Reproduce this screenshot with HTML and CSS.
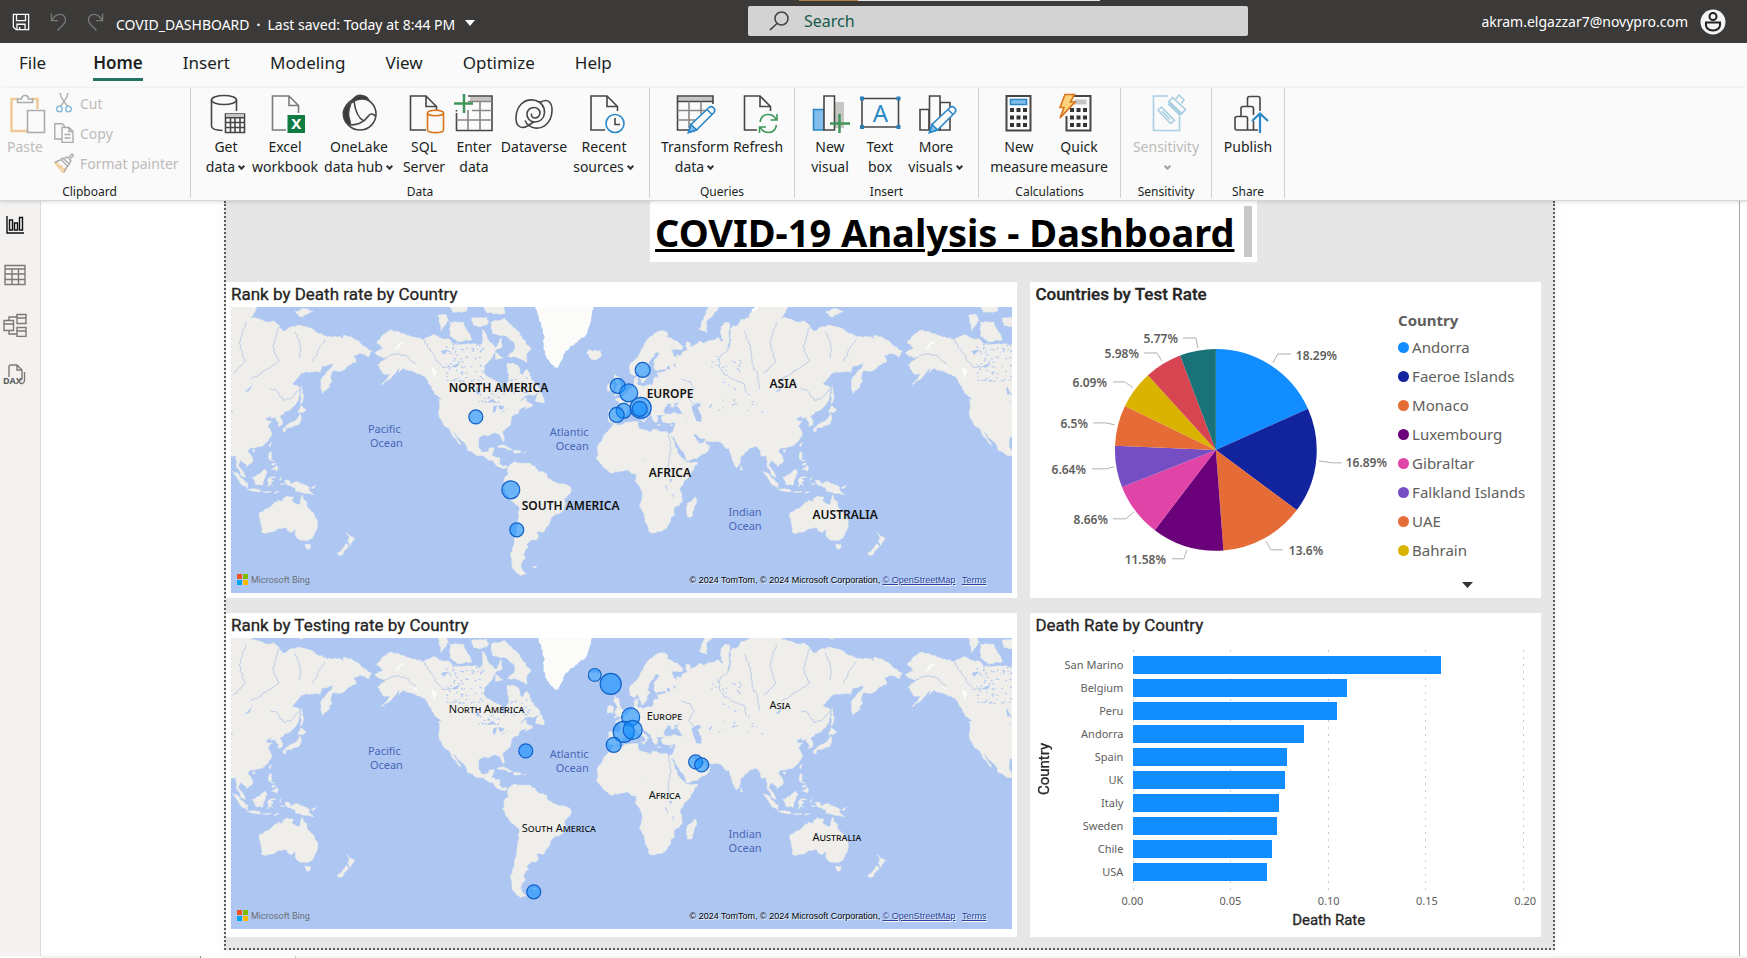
FILE: index.html
```html
<!DOCTYPE html>
<html lang="en">
<head>
<meta charset="utf-8">
<title>COVID_DASHBOARD</title>
<link rel="stylesheet" href="styles.css">
</head>
<body>
<div class="app">
<header class="titlebar">
  <div class="progress"></div>
  <div class="doc">
    <button class="bare" aria-label="Save"><svg class="ic-save" viewBox="0 0 20 20"><path d="M1.5 1.5h17v17H4.500l-3-3zM5 1.500v7h10v-7M5.500 18.500v-6h9v6M8.500 18v-2.500"/></svg></button>
    <button class="bare dim" aria-label="Undo"><svg class="ic-undo" viewBox="0 0 18 20"><path d="M1.500 1v7.500h7M1.800 8.300C4 4.500 7 2 10.500 2c3.500 0 6 2.500 6 5.500 0 5-5 7-8.500 11.500"/></svg></button>
    <button class="bare dim" aria-label="Redo"><svg class="ic-undo" viewBox="0 0 18 20"><path d="M16.500 1v7.500h-7M16.200 8.300C14 4.500 11 2 7.500 2c-3.500 0-6 2.500-6 5.500 0 5 5 7 8.500 11.500"/></svg></button>
    <button class="bare docname"><span>COVID_DASHBOARD</span><b>·</b><span>Last saved: Today at 8:44 PM</span><svg class="ic-caret" viewBox="0 0 10 6"><path d="M0 0h10L5 6z"/></svg></button>
  </div>
  <label class="search"><svg viewBox="0 0 20 20"><circle cx="12.500" cy="7.500" r="6.500"/><path d="M8 12.500.800 19.200"/></svg><input type="text" placeholder="Search" aria-label="Search"></label>
  <button class="bare account">akram.elgazzar7@novypro.com
    <svg viewBox="0 0 26 26"><circle class="disc" cx="13" cy="13" r="12.500"/><circle cx="13" cy="7.500" r="3.500"/><path d="M6 13.500h14c.8 5.500-2.500 8-7 8s-7.800-2.500-7-8z"/></svg></button>
</header>

<nav class="tabs">
  <button>File</button><button class="on">Home</button><button>Insert</button><button>Modeling</button><button>View</button><button>Optimize</button><button>Help</button>
</nav>

<section class="ribbon">
  <div class="group g-clip">
    <div class="tools">
      <button class="tool off"><svg viewBox="0 0 40 40"><path class="or" d="M13 5H6.500v32H22M27 5h5.500v10" stroke-width="2.500"/><path class="gy" d="M12.500 8.500V5h4c0-2 1.500-3.500 3.500-3.500S23.500 3 23.500 5h4v3.500z"/><path class="gy paper" d="M22.500 16.500h17v22h-17z"/></svg>Paste</button>
      <div class="stack">
        <button><svg viewBox="0 0 20 20"><path class="gy" d="M6 0c.5 4 2 7 8 13.500M14 0c-.5 4-2 7-8 13.500"/><circle class="bl" cx="5.500" cy="16" r="2.800"/><circle class="bl" cx="14.500" cy="16" r="2.800"/></svg>Cut</button>
        <button><svg viewBox="0 0 20 20"><path class="gy" d="M8 16H.8V.8H8l3 3M8 4.500h7l4 4v11H8zM15 4.500v4h4M10.500 11.500h6M10.500 15h6"/></svg>Copy</button>
        <button><svg viewBox="0 0 20 20"><path class="or" d="M2 9l9 9-2 1.500L1 10z"/><path class="or" d="M5 14l4-1M8 17l5-2"/><path class="gy" d="M.8 9.500 7 6.500l6.500 6.500-3.500 6M7 6.500l1.500-1.500 7 6-1.800 2M10.500 5.500 12 4l2 1 4-4 1.500 1.500-4 4L17 8l-1.500 2"/></svg>Format painter</button>
      </div>
    </div>
    <h2>Clipboard</h2>
  </div>
  <div class="group g-data">
    <div class="tools">
      <button class="tool"><svg viewBox="0 0 40 40"><ellipse cx="18" cy="6" rx="12.500" ry="4.500"/><path d="M5.500 6v26c0 2.500 4 4.300 11 4.500M30.500 6v11"/><path class="paper" d="M19.500 20h19v18.500h-19z"/><path class="fg" d="M20 20h18v3.500H20z"/><path d="M19.500 23.800h19M19.500 28.500h19M19.500 33.500h19M24.500 24v14.500M29 24v14.500M34 24v14.500"/></svg>Get<br>data<i></i></button>
      <button class="tool"><svg viewBox="0 0 40 40"><path d="M21 36H7.500V2H24l9.500 9.500V19M24 2v9.500h9.500" stroke="#7a7a7a"/><path class="xl" d="M22.500 21h17.500v18h-17.500z"/><text class="xlt" x="31.200" y="35">X</text></svg>Excel<br>workbook</button>
      <button class="tool"><svg viewBox="0 0 40 40"><circle cx="21" cy="20" r="16"/><path class="fk" d="M12 9C14 3 19 .8 23 1.500c3.500.5 6 2.500 7 5-6-2.500-12-2-18 2.500zM12 9C6 12 3.500 17 4.500 22c.5 4 3 7.500 6 9.500C13 29 9 24 9.500 19c.2-4 1.500-7 2.500-10z"/><path d="M15 7c1 9 4 17 10 20M36 22c-2-3-5-2.500-7 .5-4 6-12 9.500-19 8"/></svg>OneLake<br>data hub<i></i></button>
      <button class="tool"><svg viewBox="0 0 40 40"><path d="M22 36H6.500V2H22l10.500 10.500V16M22 2v10.500h10.500"/><path class="so paper" d="M23.500 19v17c0 3.500 16 3.500 16 0V19"/><ellipse class="so paper" cx="31.500" cy="19" rx="8" ry="2.800"/></svg>SQL<br>Server</button>
      <button class="tool"><svg viewBox="0 0 40 40"><path class="fg" d="M16 2.500h21V7H16z"/><path d="M14 2h24v34.500H2.500V19M2.500 17.500V16"/><path class="th" d="M14 7.500h24M18 16.500h20M2.500 26h35.500M14 16v20M26 7.500V36"/><path class="gn" d="M10 0v19M0 9.500h19" stroke-width="2.500"/></svg>Enter<br>data</button>
      <button class="tool"><svg viewBox="0 0 40 40"><path d="M13.500 32C6 36 1.500 31 2 23 2.500 12 10 5 19 6c8 1 12 7 11.500 13-.5 6-5 9-9.500 9-5 0-8.500-4-8-8.500.4-3.500 3.500-6 7-6s6 2.500 6 5.500-2.500 5-5 5-4-2-3.500-4.500M27 8c7-4 11.500 1 11 9-.5 11-8 18-17 17-5-.8-8.500-4-10-7.500M13.500 32l6-4M27 8l-4-.5"/></svg>Dataverse</button>
      <button class="tool"><svg viewBox="0 0 40 40"><path d="M21 36H7V2h16l10.500 10.500V17M23 2v10.500h10.500"/><circle class="bl paper" cx="31" cy="29.500" r="9"/><path d="M31 24v6.500h5"/></svg>Recent<br>sources<i></i></button>
    </div>
    <h2>Data</h2>
  </div>
  <div class="group g-queries">
    <div class="tools">
      <button class="tool"><svg viewBox="0 0 40 40"><path class="fg" d="M3 2.500h35V7H3z"/><path d="M38 10V2H2.500v34H15M2.500 7.500H38"/><path class="th" d="M2.500 16.500H32M2.500 26H22M14 7.500V34M26 7.500V20"/><path class="bl paper" d="M13.500 38.500l2.500-8L34 13.500c3-2.500 7.500 1.500 5 5L21.500 36z"/><path class="bl fb" d="M13.500 38.500l2.500-8 5.500 5.500z"/><path class="bl" d="M32 15.500l5 5"/></svg>Transform<br>data<i></i></button>
      <button class="tool"><svg viewBox="0 0 40 40"><path d="M19 36H6.500V2H22l10.500 10.500V17M22 2v10.500h10.500"/><path class="gn" d="M22 28c1-5 4-7.500 8-7.500 3.500 0 6.500 1.500 8 5M39 20v6h-6.500M38.500 31c-1 5-4 7.500-8 7.500-3.500 0-6.500-1.500-8-5M21.500 39v-6H28"/></svg>Refresh</button>
    </div>
    <h2>Queries</h2>
  </div>
  <div class="group g-insert">
    <div class="tools">
      <button class="tool"><svg viewBox="0 0 40 40"><path class="bl fb" d="M3.500 15.500H14V36H3.500z"/><path class="fg" d="M25 8h9v26h-9z" stroke="#aaa"/><path class="paper" d="M14 2h10.500v34H14z"/><path class="gn" d="M29.500 20v19M20 29.500h20" stroke-width="2.500"/></svg>New<br>visual</button>
      <button class="tool"><svg viewBox="0 0 40 40"><path class="paper" d="M2 4.500h36.500V33H2z"/><path class="hd" d="M0 2.500h4v4H0zM36.500 2.500h4v4h-4zM0 31h4v4H0zM36.500 31h4v4h-4z"/><text class="ta" x="20.500" y="28">A</text></svg>Text<br>box</button>
      <button class="tool"><svg viewBox="0 0 40 40"><path d="M4 15.500h9V36H4zM24 8.500h10V36H24z"/><path class="paper" d="M13.500 2H24v34H13.500z"/><path class="bl paper" d="M13.500 38.500l2.500-8L34 13.500c3-2.500 7.500 1.500 5 5L21.500 36z"/><path class="bl fb" d="M13.500 38.500l2.500-8 5.500 5.500z"/><path class="bl" d="M32 15.500l5 5"/></svg>More<br>visuals<i></i></button>
    </div>
    <h2>Insert</h2>
  </div>
  <div class="group g-calc">
    <div class="tools">
      <button class="tool"><svg viewBox="0 0 40 40"><path class="paper" d="M7.500 2h24v34.500h-24z" stroke-width="2"/><path class="bl fb" d="M11.500 5.500h16v5h-16z"/><path class="dots" d="M11 16h18M11 23.500h18M11 31h18"/></svg>New<br>measure</button>
      <button class="tool"><svg viewBox="0 0 40 40"><path class="paper" d="M14 2h17.500v34.500h-24V22" stroke-width="2"/><path class="fg" d="M16 5.500h11.500v5H13z" stroke="#888"/><path class="dots" d="M11 16h18M11 23.500h18M11 31h18"/><path class="bolt" d="M6 .5h9.500L11.500 8H16L1 24l4-10.500H1z"/></svg>Quick<br>measure</button>
    </div>
    <h2>Calculations</h2>
  </div>
  <div class="group g-sens">
    <div class="tools">
      <button class="tool off sens"><svg viewBox="0 0 40 40"><path class="bs" d="M22 2H7.500v34.500h26V22M12 16l3.500-3 13 13.500-4 3zM16 17l8 8.500M22.500 8l4-4.500 13 12-4 4.500zM30 5l3-4 5 5-2.500 3.500"/><path class="bs" d="M23 9l12 11.500" stroke-width="4"/></svg>Sensitivity<br><i></i></button>
    </div>
    <h2>Sensitivity</h2>
  </div>
  <div class="group g-share">
    <div class="tools">
      <button class="tool"><svg viewBox="0 0 40 40"><path d="M7 24.500c0-1.500.7-2 2-2h8.500c1.500 0 2 .7 2 2V36H9c-1.500 0-2-.5-2-2zM13 22v-7.500c0-1.500.7-2 2-2h8.500c1.500 0 2 .7 2 2V21M19.500 12V4.500c0-1.500.7-2 2-2H30c1.500 0 2 .7 2 2V17M19.500 36H30M25.500 27v9"/><path class="bl" d="M32 39V19.500M24 27l8-7.500 8 7.500" stroke-width="2.200"/></svg>Publish</button>
    </div>
    <h2>Share</h2>
  </div>
</section>

<div class="body">
  <aside class="rail">
    <button aria-label="Report view"><svg class="act" viewBox="0 0 24 24"><path d="M4 3v17h17M6.500 7h3v10h-3zM11.500 10h3v7h-3zM16.500 4.500h3V17h-3z"/></svg></button>
    <button aria-label="Table view"><svg viewBox="0 0 24 24"><path d="M2 2.500h20v19H2zM2 6h20M2 11h20M2 16.500h20M9 6v15.500M15.500 6v15.500"/></svg></button>
    <button aria-label="Model view"><svg viewBox="0 0 24 24"><path d="M1 7.500h9.500v10H1zM1 11h9.500M14 1.500h9v9h-9zM14 5h9M14 14.500h9v9h-9zM14 18h9M6 7.500V4h8M6 17.500V21h8"/></svg></button>
    <button aria-label="DAX query view"><svg viewBox="0 0 24 24"><path d="M6 14V4c0-1.500.5-2 2-2h6l5 5v8c0 1.500-.5 2-1.500 2.500M14 2v5h5M21.500 9v8c0 2.500-1 3.500-3.500 3.800"/><text x="0" y="21">DAX</text></svg></button>
  </aside>

  <main class="workspace">
    <div class="page">
      <div class="banner"><h1>COVID-19 Analysis - Dashboard</h1><span></span></div>
      <div class="cards">
        <article class="card">
          <h3>Rank by Death rate by Country</h3>
          <div class="map">
            <svg viewBox="0 0 782 286">
              <g class="world"></g>
              <g class="ocean"><text x="137" y="126">Pacific</text><text x="139" y="140">Ocean</text><text x="319" y="129">Atlantic</text><text x="325" y="143">Ocean</text><text x="498" y="209">Indian</text><text x="498" y="223">Ocean</text></g>
              <g class="cont"><text x="218" y="85">NORTH AMERICA</text><text x="291" y="203">SOUTH AMERICA</text><text x="416" y="91">EUROPE</text><text x="539" y="81">ASIA</text><text x="418" y="170">AFRICA</text><text x="582" y="212">AUSTRALIA</text></g>
              <g class="bub"><circle cx="245" cy="110" r="7"/><circle cx="280" cy="183" r="9"/><circle cx="286" cy="223" r="7"/><circle cx="412" cy="63" r="7.500"/><circle cx="387" cy="79" r="7.500"/><circle cx="398" cy="86" r="9"/><circle cx="410" cy="101" r="10.500"/><circle cx="409" cy="102" r="7.500"/><circle cx="393" cy="104" r="7.500"/><circle cx="386" cy="108" r="7.500"/></g>
            </svg>
            <div class="bing"><svg viewBox="0 0 11 11"><path fill="#f25022" d="M0 0h5v5H0z"/><path fill="#7fba00" d="M6 0h5v5H6z"/><path fill="#00a4ef" d="M0 6h5v5H0z"/><path fill="#ffb900" d="M6 6h5v5H6z"/></svg>Microsoft Bing</div>
            <div class="credit">© 2024 TomTom, © 2024 Microsoft Corporation, <a href="#osm">© OpenStreetMap</a> <a href="#terms">Terms</a></div>
          </div>
        </article>

        <article class="card">
          <h3 class="strong">Countries by Test Rate</h3>
          <div class="pie">
            <svg viewBox="0 0 364 286">
              <g class="slices" transform="rotate(-90 186 143)">
                <circle stroke="#118dff" stroke-dasharray="18.29 100" pathLength="100" cx="186" cy="143" r="50.500"/>
                <circle stroke="#12239e" stroke-dasharray="16.89 100" stroke-dashoffset="-18.29" pathLength="100" cx="186" cy="143" r="50.500"/>
                <circle stroke="#e66c37" stroke-dasharray="13.6 100" stroke-dashoffset="-35.18" pathLength="100" cx="186" cy="143" r="50.500"/>
                <circle stroke="#6b007b" stroke-dasharray="11.58 100" stroke-dashoffset="-48.78" pathLength="100" cx="186" cy="143" r="50.500"/>
                <circle stroke="#e044a7" stroke-dasharray="8.66 100" stroke-dashoffset="-60.36" pathLength="100" cx="186" cy="143" r="50.500"/>
                <circle stroke="#744ec2" stroke-dasharray="6.64 100" stroke-dashoffset="-69.02" pathLength="100" cx="186" cy="143" r="50.500"/>
                <circle stroke="#e66c37" stroke-dasharray="6.5 100" stroke-dashoffset="-75.66" pathLength="100" cx="186" cy="143" r="50.500"/>
                <circle stroke="#d9b300" stroke-dasharray="6.09 100" stroke-dashoffset="-82.16" pathLength="100" cx="186" cy="143" r="50.500"/>
                <circle stroke="#d64550" stroke-dasharray="5.98 100" stroke-dashoffset="-88.25" pathLength="100" cx="186" cy="143" r="50.500"/>
                <circle stroke="#197278" stroke-dasharray="5.77 100" stroke-dashoffset="-94.23" pathLength="100" cx="186" cy="143" r="50.500"/>
              </g>
              <path class="lead" d="M243 56l5-9h13M289 154l14 2h9M236 234l5 9h12M157 243l-3 9h-12M104 205l-8 7H83M84 160l-8 2H62M85 118l-9-2H63M103 81l-8-6H83M132 54l-5-8h-13M168 41l-2-10h-13"/>
              <g class="pct"><text x="266" y="53">18.29%</text><text x="316" y="160">16.89%</text><text x="259" y="248">13.6%</text></g>
              <g class="pct end"><text x="136" y="257">11.58%</text><text x="78" y="217">8.66%</text><text x="56" y="167">6.64%</text><text x="58" y="121">6.5%</text><text x="77" y="80">6.09%</text><text x="109" y="51">5.98%</text><text x="148" y="36">5.77%</text></g>
            </svg>
            <div class="legend">
              <h4>Country</h4>
              <ul><li class="c1">Andorra</li><li class="c2">Faeroe Islands</li><li class="c3">Monaco</li><li class="c4">Luxembourg</li><li class="c5">Gibraltar</li><li class="c6">Falkland Islands</li><li class="c3">UAE</li><li class="c8">Bahrain</li></ul>
              <button class="bare" aria-label="More"><svg viewBox="0 0 11 6"><path d="M0 0h11L5.500 6z"/></svg></button>
            </div>
          </div>
        </article>

        <article class="card">
          <h3>Rank by Testing rate by Country</h3>
          <div class="map">
            <svg viewBox="0 0 782 291">
              <g transform="translate(0 -9)"><g class="world"></g></g>
              <g class="ocean"><text x="137" y="117">Pacific</text><text x="139" y="131">Ocean</text><text x="319" y="120">Atlantic</text><text x="325" y="134">Ocean</text><text x="498" y="200">Indian</text><text x="498" y="214">Ocean</text></g>
              <g class="cont small"><text x="218" y="75">North America</text><text x="291" y="194">South America</text><text x="416" y="82">Europe</text><text x="539" y="71">Asia</text><text x="418" y="161">Africa</text><text x="582" y="203">Australia</text></g>
              <g class="bub"><circle cx="364" cy="37" r="6.500"/><circle cx="380" cy="46" r="10.500"/><circle cx="295" cy="113" r="7"/><circle cx="303" cy="254" r="7"/><circle cx="400" cy="79" r="9"/><circle cx="393" cy="94" r="10.500"/><circle cx="402" cy="92" r="9.500"/><circle cx="383" cy="107" r="7.500"/><circle cx="465" cy="124" r="7"/><circle cx="471" cy="127" r="7"/></g>
            </svg>
            <div class="bing"><svg viewBox="0 0 11 11"><path fill="#f25022" d="M0 0h5v5H0z"/><path fill="#7fba00" d="M6 0h5v5H6z"/><path fill="#00a4ef" d="M0 6h5v5H0z"/><path fill="#ffb900" d="M6 6h5v5H6z"/></svg>Microsoft Bing</div>
            <div class="credit">© 2024 TomTom, © 2024 Microsoft Corporation, <a href="#osm">© OpenStreetMap</a> <a href="#terms">Terms</a></div>
          </div>
        </article>

        <article class="card">
          <h3>Death Rate by Country</h3>
          <div class="bars">
            <div class="ytitle">Country</div>
            <ul class="cats"><li>San Marino</li><li>Belgium</li><li>Peru</li><li>Andorra</li><li>Spain</li><li>UK</li><li>Italy</li><li>Sweden</li><li>Chile</li><li>USA</li></ul>
            <div class="plot">
              <div style="width:78.8%"></div><div style="width:54.7%"></div><div style="width:52.1%"></div><div style="width:43.7%"></div><div style="width:39.3%"></div><div style="width:38.8%"></div><div style="width:37.3%"></div><div style="width:36.7%"></div><div style="width:35.5%"></div><div style="width:34.2%"></div>
            </div>
            <div class="ticks"><span>0.00</span><span>0.05</span><span>0.10</span><span>0.15</span><span>0.20</span></div>
            <div class="xtitle">Death Rate</div>
          </div>
        </article>
      </div>
    </div>
  </main>
</div>
<footer class="pages"><span class="nav"></span><span class="current"></span><span class="rest"></span></footer>
</div>
<script src="map.js"></script>
</body>
</html>
```

FILE: styles.css
```css
* { box-sizing: border-box; }
body { margin: 0; font-family: "Noto Sans", "Open Sans", sans-serif; font-size: 14px; color: #201f1e; background: #fff; }
button { font: inherit; color: inherit; background: none; border: 0; padding: 0; margin: 0; }
h1, h2, h3, h4, ul { margin: 0; padding: 0; list-style: none; }
svg { display: block; fill: none; stroke: #484644; stroke-width: 1.6; }
svg text { stroke: none; }
.app { height: 100vh; display: flex; flex-direction: column; overflow: hidden; }

/* title bar */
.titlebar { position: relative; flex: none; height: 43px; background: #3b3a39; color: #fff; display: grid; grid-template-columns: 748fr 500fr 499fr; align-items: center; }
.progress { position: absolute; top: 0; left: 799px; width: 301px; height: 1px; background: linear-gradient(90deg, #b0813f 59px, #e6e6e6 59px); }
.doc { display: flex; align-items: center; padding-left: 12px; gap: 20px; }
.doc svg { stroke: #fff; stroke-width: 1.4; }
.doc .dim svg { stroke: #7b7a79; }
.ic-save { width: 18px; height: 20px; }
.ic-undo { width: 17px; height: 20px; }
.docname { display: flex; align-items: center; gap: 7px; margin-left: -8px; padding-top: 6px; }
.docname b { font-weight: 700; }
.doc .ic-caret { width: 10px; height: 6px; margin: 0 0 4px 3px; fill: #fff; stroke: none; }
.search { display: flex; align-items: center; height: 30px; background: #d3d3d3; border-radius: 2px; padding-left: 21px; gap: 15px; margin-bottom: 1px; }
.search svg { width: 20px; height: 20px; flex: none; }
.search input { flex: 1; border: 0; background: none; font: inherit; font-size: 16px; padding: 0; outline: 0; }
.search input::placeholder { color: #17594c; opacity: 1; }
.account { justify-self: end; display: flex; align-items: center; gap: 12px; padding-right: 21px; }
.account svg { width: 26px; height: 26px; stroke: #222; stroke-width: 2; }
.account .disc { fill: #f5f5f5; stroke: none; }

/* tabs */
.tabs { flex: none; display: flex; background: #fafafa; padding-left: 19px; gap: 40px; height: 45px; }
.tabs button { font-size: 17px; line-height: 24px; height: 38px; padding: 8px 0 3px; border-bottom: 3px solid transparent; }
.tabs .on { font-weight: 600; margin-left: 7px; border-color: #217663; }

/* ribbon */
.ribbon { position: relative; z-index: 1; flex: none; display: flex; height: 113px; background: #fafafa; border-bottom: 1px solid #d6d6d6; box-shadow: 0 1px 4px rgba(0,0,0,.14); }
.group { height: 110px; border-right: 1px solid #d2d0ce; display: flex; flex-direction: column; justify-content: space-between; }
.group h2 { font-size: 12px; line-height: 16px; font-weight: 400; text-align: center; margin-bottom: -2px; }
.tools { display: grid; align-items: start; padding-top: 6px; }
.tool { display: block; line-height: 20px; text-align: center; white-space: nowrap; }
.tool svg { width: 40px; height: 40px; margin: 0 auto 3px; overflow: visible; }
.tool i { display: inline-block; width: 5px; height: 5px; border: solid #333; border-width: 0 2px 2px 0; transform: rotate(45deg); margin: 0 2px 3px 4px; }
.off, .stack { color: #bdbbb9; }
.tool.off i { border-color: #a5a3a1; }
.g-clip { width: 191px; }
.g-clip h2 { padding-right: 11px; }
.g-clip .tools { grid-template-columns: 50px auto; }
.g-clip svg { opacity: .55; }
.stack { display: grid; grid-auto-rows: 30px; padding-left: 4px; }
.stack button { display: flex; align-items: center; gap: 6px; height: 18px; white-space: nowrap; }
.stack svg { width: 20px; height: 20px; stroke-width: 1.4; }
.g-data { width: 459px; }
.g-data .tools { padding-left: 10px; grid-template-columns: 50px 68px 80px 50px 50px 70px 70px; }
.g-queries { width: 145px; }
.g-queries .tools { padding-left: 10px; grid-template-columns: 70px 56px; }
.g-insert { width: 184px; }
.g-insert .tools { padding-left: 11px; grid-template-columns: 48px 52px 60px; }
.g-calc { width: 142px; }
.g-calc .tools { padding-left: 10px; grid-template-columns: 60px 60px; }
.g-sens { width: 91px; }
.g-share { width: 73px; }
.paper { fill: #fafafa; }
.or { stroke: #e9a34a; }
.gy { stroke: #6b6b6b; }
.bl { stroke: #2b88c8; }
.fb { fill: #83bdec; }
.fg { fill: #c8c6c4; stroke: none; }
.fk { fill: #3b3a39; }
.so { stroke: #d8741c; }
.gn { stroke: #40965a; }
.th { stroke: #8a8886; }
.bs { stroke: #a9cfe2; }
.xl { fill: #107c41; stroke: none; }
.xlt { fill: #fff; font-size: 15px; font-weight: 700; text-anchor: middle; }
.hd { fill: #2b7fb8; stroke: none; }
.ta { fill: #2b88c8; font-size: 24px; text-anchor: middle; }
.dots { stroke: #333; stroke-width: 4; stroke-dasharray: 4 2.500; }
.bolt { fill: #fcd27a; stroke: #d8741c; }

/* body */
.body { flex: 1; display: flex; min-height: 0; }
.rail { width: 41px; flex: none; background: #f3f2f1; border-right: 1px solid #dddbd9; padding: 12px 0 0 3px; display: flex; flex-direction: column; gap: 26px; }
.rail button { width: 24px; height: 24px; }
.rail svg { width: 24px; height: 24px; stroke: #7c7a78; stroke-width: 1.4; }
.rail .act { stroke: #111; }
.rail text { font-size: 9px; font-weight: 700; fill: #605e5c; }
.workspace { flex: 1; min-width: 0; padding: 0 184px 0 183px; margin-right: 7px; border-right: 1px solid #a8a8a8; }
.page { background: #e6e6e6; border: 2px dotted #5a5a5a; border-top: 0; box-shadow: 0 0 10px rgba(0,0,0,.06); padding-bottom: 11px; }
.banner { width: 607px; height: 61px; margin: 0 auto 20px 424px; background: #fff; display: flex; justify-content: space-between; padding: 5px; }
.banner h1 { font-size: 38px; line-height: 52px; color: #000; text-decoration: underline; text-decoration-thickness: 3px; white-space: nowrap; }
.banner span { width: 8px; height: 51px; background: #c8c8c8; }
.cards { display: grid; grid-template-columns: 792fr 511fr; gap: 15px 13px; padding-right: 12px; }
.card { background: #fff; padding: 0 5px 5px; min-width: 0; }
.card h3 { font-family: Roboto, sans-serif; font-size: 17px; font-weight: 400; line-height: 25px; height: 25px; color: #252423; -webkit-text-stroke: .3px #252423; }
.card h3.strong { font-weight: 500; }

/* maps */
.map { position: relative; background: #adc7f2; }
.map > svg { width: 100%; height: auto; stroke: none; overflow: hidden; }
.land { fill: #efeeea; stroke: #efeeea; stroke-width: .6; stroke-linejoin: round; }
.ice { fill: #fbfbfa; }
.lake { fill: #adc7f2; }
.river { fill: none; stroke: #b7c8e8; stroke-width: .9; }
.ocean text { font-size: 11px; fill: #4a66b8; }
.cont text { font-size: 12px; font-weight: 600; fill: #111; }
.cont.small text { font-size: 11px; font-weight: 400; font-variant: small-caps; }
.bub circle { fill: #118dff; fill-opacity: .6; stroke: #1160c9; stroke-width: 1.2; }
.bing { position: absolute; left: 6px; bottom: 6px; display: flex; align-items: center; gap: 3px; font-family: Roboto, sans-serif; font-size: 9px; line-height: 14px; color: #6b7078; }
.bing svg { width: 11px; height: 11px; stroke: none; }
.credit { position: absolute; right: 26px; bottom: 6px; font-family: "Liberation Sans", sans-serif; font-size: 9px; line-height: 14px; color: #000; text-shadow: 1px 1px 1px #fff; white-space: nowrap; }
.credit a { color: #2a3f9a; }
.credit a + a { margin-left: 4px; }

/* pie */
.pie { display: grid; grid-template-columns: 364fr 142fr; margin-left: -5px; }
.pie > svg { width: 100%; height: auto; overflow: visible; }
.slices { stroke-width: 101; }
.lead { stroke: #b3b0ad; stroke-width: 1; }
.pct text { font-size: 12px; font-weight: 600; fill: #605e5c; }
.pct.end { text-anchor: end; }
.legend { padding-left: 4px; color: #605e5c; display: flex; flex-direction: column; min-width: 0; }
.legend h4 { font-size: 15px; line-height: 26px; }
.legend ul { font-size: 15px; line-height: 29px; white-space: nowrap; }
.legend li { display: flex; align-items: center; gap: 3px; }
.legend li::before { content: ""; width: 11px; height: 11px; border-radius: 50%; background: var(--c); }
.c1 { --c: #118dff; } .c2 { --c: #12239e; } .c3 { --c: #e66c37; } .c4 { --c: #6b007b; }
.c5 { --c: #e044a7; } .c6 { --c: #744ec2; } .c8 { --c: #d9b300; }
.legend button { align-self: center; margin-top: 17px; }
.legend button svg { width: 11px; height: 6px; fill: #333; stroke: none; }

/* bar chart */
.bars { display: grid; grid-template-columns: 18px 70px 1fr; column-gap: 5px; padding: 7px 12px 0 0; }
.ytitle { font-family: Roboto, sans-serif; font-size: 15px; writing-mode: vertical-rl; transform: rotate(180deg); text-align: center; color: #252423; -webkit-text-stroke: .3px #252423; }
.cats { text-align: right; font-size: 11px; line-height: 18px; color: #605e5c; display: grid; gap: 5px; padding: 11px 5px 11px 0; white-space: nowrap; margin-left: -5px; }
.plot { display: grid; gap: 5px; padding: 11px 0; background: repeating-linear-gradient(180deg, #fff 0 5px, transparent 5px 7px), repeating-linear-gradient(90deg, #cfcdcb 0 1px, transparent 1px calc(25% - .25px)); }
.plot div { height: 18px; background: #118dff; }
.ticks { grid-column: 3; display: flex; justify-content: space-between; margin: 0 -12px; font-size: 11px; line-height: 18px; color: #605e5c; }
.xtitle { grid-column: 3; text-align: center; font-family: Roboto, sans-serif; font-size: 15px; line-height: 20px; color: #252423; -webkit-text-stroke: .3px #252423; padding-bottom: 2px; }

/* page tabs */
.pages { flex: none; height: 2px; display: flex; padding-left: 41px; background: #fff; }
.pages .nav { width: 160px; background: #f3f2f1; border-right: 1px solid #8a8886; }
.pages .current { width: 94px; }
.pages .rest { flex: 1; background: #f3f2f1; border-left: 1px solid #c8c6c4; }
```

FILE: map.js
```js
// Coastlines as "lon,lat" rings, drawn in a Mercator projection that repeats every 360 degrees.
const LAND = [
 // Eurasia
 "-9,37 -9.5,38.7 -8.8,41 -9.3,43 -5,43.6 -1.8,43.4 -1.2,45.5 -2.5,47.3 -4.7,48 -4,48.7 -1.6,48.7 -1.8,49.7 0,49.4 1.6,50.9 3.5,51.5 4.7,53 7,53.5 8.6,53.9 8.1,55.6 8.2,57 10.6,57.7 10.2,56.5 10.9,56.4 9.8,55.3 10.9,54.3 12.5,54.4 14.2,53.9 16.5,54.5 18.6,54.7 19.8,54.5 21,55.3 21.1,57 22.6,57.7 24.3,57.2 24.4,58.3 23.5,59.2 28,59.5 30,59.9 28.5,60.6 25,60.2 22.9,59.9 21.4,60.9 21.5,63 24.5,64.8 25.3,65.3 23.8,65.8 22,65.5 21.3,64.4 17.8,62.6 17.1,61 18.9,59.8 16.8,58.6 16.4,57 14.3,55.6 12.9,55.5 11.2,58.5 10.6,59.4 8.2,58.1 5.6,58.8 5,60.5 5.2,62 8.5,63.5 11,64.7 13,66.5 15.5,68.3 19,69.8 23,70.8 28,71.1 31,70.4 30,69.6 33,69.4 37,68.7 41,67.4 40.5,66.4 35,66.4 32.8,66.8 34.8,64.5 37.8,63.9 37,65.1 39.8,64.6 41.5,66 44,66.2 43.5,68.5 46,68.2 46,66.9 53,68.6 54.5,68.2 60,68.8 64.5,69.6 68.3,68.4 66.8,70.5 67,72 69.5,72.9 72.6,72.8 72,70.5 72.5,68.5 70.5,66.4 73,67.3 74,69 73.5,71.3 75,72.2 78,72.3 80.5,73.5 86,73.8 88,75.2 95,76 100,76.4 104.5,77.6 113,76 107,73.6 110,73.9 114,73.6 119,73 123.5,73.2 127,72.3 130,71 133,71.6 140,72.4 150,71.5 152,70.9 160,69.7 168,69.8 171,69.1 170.5,70 177,69.5 180,68.9 185,67.2 190,66 187.5,64.3 182,65.5 180,65 177.5,64.7 179.3,62.8 177,62.5 174,61.7 170,60 166,59.8 163,59.8 162,58 163,56.2 160,53.2 156.7,51 155.6,54 156,57 159.5,59.5 163.5,61.8 164,62.5 160,61.7 156,61.5 155,59.4 149,59.5 142.5,59.2 135.5,54.7 139.8,54.2 141.4,53 140.5,50 140.2,48 136,44.5 133,42.8 130.7,42.3 127.5,39.8 129.4,37 129,35.2 126.5,34.4 126.5,37 125,38 125,39.6 121.5,39 122,40.5 118,39.1 119,37.3 122.5,37.2 119.3,35 121,32.5 121.8,31 121.5,28.5 119.5,25.5 116.5,23 113.5,22.2 110.5,21.2 107,21 105.8,19 108.5,16 109.3,12.5 107,10.5 105,8.7 105,10.3 102.5,12 100.9,13.4 99.3,9.3 102,6.3 103.4,4 104.2,1.4 101,3 100.2,6.5 98.3,8.5 98.6,12 97.6,16.4 95.3,15.8 94.3,16.1 94,19 92,21.5 90.5,22.5 87,21.4 85,19.5 82.2,16.7 80.2,15.5 80,12.5 79.3,10.3 77.6,8.1 76.3,9.8 74.5,14 72.9,19 72.7,21.2 70.5,20.8 69,22.3 67,24.8 61.6,25.2 57.3,25.7 56.3,27.1 52.6,27.5 50.2,30 48.5,30 48.2,28.7 50.2,26.6 51,24.6 51.5,25.9 51.6,24.2 54,24.1 56.2,26.2 56.6,24.3 59.8,22.4 57.8,19 55.2,17.5 52,15.6 45,12.8 43.4,12.8 42.8,16 39,21.3 35,28 35,29.5 34.3,27.8 32.5,30 34.3,31.3 36,35 36,36.8 32.5,36.1 30.5,36.5 27.5,37 26.3,39.3 29,40.9 31,41.2 35,42 38,41 41.5,41.5 39,44 37,45.2 38,46.8 39.2,47.2 35,46.2 34.9,45.6 36.5,45.3 33.8,44.4 32.6,45.4 33.6,46.1 30.8,46.5 28.6,43.8 27.8,42.5 29,41.2 26.3,40.7 23.8,40.6 22.8,40.4 24,38 23,36.5 21.5,37.3 19.4,40.5 19.5,41.8 15.5,43.8 13.6,45 12.3,45.3 12.4,44.2 14,42.5 16,41.8 18.4,40 16.9,40.4 16.6,38.6 15.9,38 15.6,40 12.5,41.6 10.3,43.5 8.7,44.4 6.5,43.1 3.2,43.3 3.2,41.9 0,40 -0.2,38.7 -2,36.8 -5.5,36.1",
 // Africa and Madagascar
 "-6,35.8 -9.8,31.5 -13,27.8 -17,21.5 -16.3,17 -17.4,14.7 -15,11 -13,8.5 -7.7,4.4 -3,5 1.2,6 4.5,6.3 6,4.3 9.5,4 9.6,1 8.8,-1 12,-5 13.5,-9 13.5,-12.5 11.8,-17.5 14.5,-22.5 15.3,-27.5 18,-32 18.5,-34.3 20,-34.8 25.7,-34 30.5,-31 32.8,-28 32.7,-26 35.5,-24 35,-20 40.5,-15.5 40.5,-10.5 39,-6.5 41.5,-2 46,2.5 51.2,11.8 47,11.2 43.3,11.6 42.5,13 39.5,15.5 37.2,19 35.5,24 32.5,30 30,31.4 25,31.6 23,32.7 20,32.5 20,30.8 15.5,32.3 11,33.5 11,37 5,36.9 -2,35.2",
 "49.3,-12 50.4,-16 47,-25 44,-25 43.5,-22 44.4,-16.2 47,-15",
 // Americas
 "-168,65.6 -162,66.8 -163.5,67.2 -166.5,68.3 -162,70.3 -156.5,71.3 -150,70.5 -141,69.7 -135,69 -128,70.3 -124,69.5 -117,69 -115,68 -109,67.8 -104,68 -98,67.8 -95,68 -95,71.5 -92,70 -91,69 -88,68 -86,67 -82,69.5 -81.5,67.2 -86,66.3 -88,64.3 -93,62 -94.5,59.5 -93,58.5 -88,56.7 -82.3,55.2 -82,52.8 -79.5,51.3 -79,54.5 -76.8,57 -78,60 -77.8,62.4 -73.5,62.4 -70,61 -69.5,59 -67.5,58.3 -64.5,60.3 -62,57.5 -60,55.3 -56,52.8 -56,51.5 -60,50.2 -66,50.2 -70,47.2 -65,49 -64.5,47 -61,46 -61,45.3 -65.7,43.6 -65,45.3 -69,44 -70.6,42.5 -70.1,41.8 -74,40.6 -75.5,38 -76,35.3 -78,33.9 -81.3,31.5 -80.1,27 -80.4,25.2 -82,27 -82.8,29.3 -84.2,30 -88,30.4 -90,29.2 -94,29.6 -97.2,28 -97.6,24 -97.5,21.5 -96,19 -94,18.2 -91,18.7 -90.3,21 -87,21.4 -88,18.3 -88.7,15.9 -83.3,15 -83.7,11 -81,8.9 -79.5,9.5 -77.3,8.4 -80,7.4 -83,8.4 -85.8,10 -87.6,13 -91.5,14 -94.5,16.2 -98,16.3 -105,19.8 -105.5,22.3 -109,26 -112.5,29.5 -114.7,31.7 -113,28.5 -109.5,23.2 -112,25.5 -115,28.5 -117,32.5 -120.6,34.6 -122.4,37.5 -124.2,40.5 -124,46 -124.6,48.3 -122.5,48 -123.5,49.2 -127.5,51 -130.3,54.5 -133.5,57.5 -137,58.7 -144,60 -148,60.8 -151.5,59.3 -151,61 -154,59 -158,56.8 -163.5,54.8 -160,56.5 -157.5,58.7 -162,58.7 -164.5,60.5 -166,61.8 -161,64 -165,64.6",
 "-77.3,8.4 -75.5,10.6 -72,12 -71,11 -68,11 -62,10.7 -57,6 -51.5,4.3 -50,0.5 -44,-2.6 -39,-3.3 -35.2,-5.3 -35,-8.5 -39,-13 -39.2,-18 -41,-22 -46,-24 -48.7,-26.5 -50,-30 -54,-34.5 -58.3,-34 -56.8,-36.5 -58,-38.3 -62.2,-38.9 -65,-41 -63.8,-42.5 -67.3,-46 -65.8,-47.5 -69,-51 -68.3,-52.5 -65.3,-54.7 -69,-55.3 -74,-52.5 -75.5,-47 -74,-42 -73.3,-38 -71.5,-33 -70.3,-26 -70.3,-18.3 -76,-14 -79.5,-7.5 -81.2,-5 -80,-2.5 -80,0.5 -77.3,4 -77.8,7",
 // Arctic Canada
 "-80,73.7 -72,71.5 -67,69 -62,66.7 -65,65 -65,62.7 -71,64.2 -78,64.5 -73,66.5 -73,68.2 -79,70 -88,70.5 -89,73",
 "-117,73 -108,73 -105,71 -102,69.2 -112,68.6 -117,70", "-125,74.3 -120,74.5 -118,73.3 -123,71.2",
 "-102,73.8 -92,74 -91,72.8 -96,72.1 -101,72.3", "-86,65.7 -81,64 -86,63.6", "-96,77 -80,77 -80,74.6 -92,74.8", "-117,76 -105,76.5 -106,75 -115,74.9",
 "-59,47.7 -53,46.8 -53,48.5 -55.5,51.5 -57.5,50.5",
 // European islands
 "-24,65.6 -22,64 -18,63.4 -14,64.8 -15,66.2 -20,66 -22.5,66.4",
 "-5.5,50.1 1.3,51.2 1.5,52.8 0,53.5 -2,56 -2,57.6 -5,58.6 -6,56.7 -3.2,54.5 -4.5,53.2 -5,51.8 -3,51.4", "-10,52 -6.3,52.2 -6,54.5 -8,55.2 -10,54",
 "12.5,38 15.5,38.2 15,36.8", "8.3,39 9.6,39.3 9.5,41 8.4,40.8", "8.7,41.6 9.4,41.8 9.3,42.9", "23.6,35.3 26.2,35.2 25,35", "32.4,34.9 34.3,35.5 33.5,34.8",
 "52,71.5 55,73.5 58,75.6 66,77 68,76.5 57,73 57.5,70.7", "138,75 145,75.5 150,75 142,74",
 // Asia and Oceania
 "131,34 135.5,33.6 140.8,35.7 142,39.5 141.3,41.4 139.8,39 136.8,37 133,35.5", "140.2,41.7 143.3,42 145.4,43.3 141.8,45.4", "130,31.3 131.7,31.8 131.7,33.6 129.8,33.3",
 "142,46.2 143.5,49.2 143,52.5 142.5,54.2 142,52", "120.2,23 121,22 121.8,25", "109,19.8 110.8,19.9 110,18.3", "80,6.5 81.6,7 80.3,9.6",
 "120,16 120.6,18.5 122.2,18.4 121.5,14 124,12.7 120.3,13.9", "122,7 125.5,5.8 126.5,8 125.3,9.7", "122,10.5 125,11 123,9.4",
 "109,1.5 111,1.8 115,5 117,7 119,5 117.5,1 116,-4 111,-3.3", "95.3,5.6 98,4.5 103.5,-1 106,-3 105.7,-5.8 102,-4 98.5,1.5", "105.3,-6.7 108.5,-6.6 114.4,-7.6 114.4,-8.6 108,-7.8",
 "119.5,-5.3 120,0.7 125,1.5 121,0.4 123.3,-1 121.5,-2 123,-4.5 121,-3", "124,-9.8 127,-8.5 124,-9", "127.5,0 128.4,1.5 128,-0.6", "116,-8.5 122,-8.4 120,-8.9", "128,-3 131,-3.2 129,-3.5",
 "131,-0.8 134,-0.9 135,-3.3 138,-1.7 144.5,-3.9 148,-6 147,-7 150.7,-10.4 147,-9.5 143,-9.2 138.5,-8.2 138,-5.5 133,-4", "149,-5.8 152,-4.3 150,-6.3",
 "113.8,-22.5 114.2,-26 115.7,-32 115.2,-34.3 118,-35 123.5,-34 126,-32.3 131.2,-31.5 135.5,-34.8 137.8,-32.8 138,-35.5 140,-38 143.5,-38.8 146.5,-39 150,-37.4 152.7,-32 153.5,-28.3 151,-23.8 146.3,-19 145.4,-15 143.5,-14 142.5,-10.8 141.6,-14 140.8,-17.5 138.5,-16.7 135.5,-14.8 136.9,-12.2 132.5,-11.3 130,-13 129.5,-15 126.5,-14 122.2,-18 119,-20",
 "144.8,-40.8 148.2,-41 147.5,-43.3 146,-43.4", "173,-34.6 175.5,-36.7 178.4,-37.7 177,-39.3 175.3,-41.6 173.8,-39.3 174.8,-37.5", "172.7,-40.6 174.3,-41.8 171,-44.5 170.5,-46 168.3,-46.6 166.6,-45.8",
 // Caribbean and South Atlantic
 "-84.8,22 -82,23.1 -77.5,21.7 -74.3,20.2 -77.6,19.9 -78.5,21", "-74,18.5 -73,19.9 -68.5,18.6 -71,18", "-67,18 -65.6,18.4 -66,18", "-61,-51.5 -58,-51.5 -59.5,-52.2"
];
const ICE = ["-73,78.3 -60,76 -55,72.5 -53,70 -53.5,67 -51.5,64.5 -49,62.5 -46,61 -43.5,61 -41.5,63 -39,65.6 -34,67.5 -25,70 -22,72.5 -19,76 -18,80 -60,82",
 "-145,61.5 -139,60.5 -140,61.5 -146,62", "-155,66.5 -149,68 -147,69 -152,68", "-128,56 -126,60 -129,61", "87,74.5 92,75.500 95,77 90,76"];
const LAKES = ["47,45 50,46.5 53,46.6 53,45 51,44.5 52.5,42 53.7,40.5 53.8,37 50,37.5 49,40 47.5,43", "58.5,44.5 61,46.5 60,44.300", "103.8,51.5 107,52.3 109.8,55.7 108,54",
 "-92,46.7 -88,48.7 -84.7,46.6 -88,47", "-87.7,42 -86.3,42.2 -85,45.7 -87.5,45", "-84,45.8 -80,45 -82,43.2 -83.7,43.9", "-83,41.6 -79,42.8 -81,42.7", "-79.7,43.3 -76.3,43.7 -78,43.8",
 "-98.5,50.5 -96.5,51 -98.5,53.8 -99.5,53", "-116,61.3 -110,62.7 -113,61", "-123,66 -118,66.5 -121,65", "-109.5,59 -106,59.3 -109,59.6", "31.8,0.3 34,0.3 33,-2.5", "29,-4 30,-4 31,-8.500", "34,-10 34.8,-10 34.6,-14",
 "30,60.5 32.5,60.3 32,61.5 30.5,61.5", "34.5,62 36,61 36,62.3", "74,46 79,46.5 75,45.3", "76.500,42.2 78,42.500 77,42.600", "13.500,13 14.500,13.500 14,12.500", "42.500,38.300 43.500,39 43.400,38.300"];
const RIVERS = ["73,67 66,64 66,61 69,58.500 74,57 83,55 84,51", "83,71 87,67 88,62 92,58 93,53", "127,72 123,67 127,63 118,60 108,57", "141,53 135,48.500 130,48 126,52 121,53.300", "158,69 153,66 150,63",
 "-135,69 -128,65 -122,61 -116,61", "-165,62.500 -157,65 -148,65 -140,62", "31,31 32,26 33,20 31,10 32,3", "48,46 45,49 49,53 46,56 40,57", "138,71 142,67 141,64", "105,73 100,68 104,63 96,59"];

const px = lon => 391.6 + 1.475 * lon;
const py = lat => 172.5 - 82.8 * Math.log(Math.tan(Math.PI / 4 + lat * Math.PI / 360));
let seed = 7;
const rnd = () => (seed = (seed * 16807) % 2147483647) / 2147483647 - 0.5;

function points(ring) {
  return ring.split(" ").map(p => { const [a, b] = p.split(",").map(Number); return [px(a), py(b)]; });
}
// Breaks long edges into short, slightly displaced ones so coasts read as natural.
function rough(pts, closed, amount) {
  const out = [];
  pts.forEach((p, i) => {
    out.push(p);
    if (!closed && i === pts.length - 1) return;
    const q = pts[(i + 1) % pts.length];
    const n = Math.floor(Math.hypot(q[0] - p[0], q[1] - p[1]) / 2);
    for (let k = 1; k < n; k++) {
      const t = k / n;
      out.push([p[0] + (q[0] - p[0]) * t + rnd() * amount, p[1] + (q[1] - p[1]) * t + rnd() * amount]);
    }
  });
  return "M" + out.map(p => p[0].toFixed(1) + " " + p[1].toFixed(1)).join("L") + (closed ? "Z" : "");
}
const layer = (list, cls, closed, amount) =>
  `<path class="${cls}" d="${list.map(r => rough(points(r), closed, amount)).join("")}"/>`;

// Scattered small lakes of northern Canada and Siberia.
function specks() {
  let d = "";
  const areas = [[-120, -95, 56, 68, 70], [-78, -62, 51, 58, 22], [-100, -80, 47, 53, 16], [60, 80, 60, 66, 16], [65, 95, 43, 56, 14]];
  areas.forEach(([w, e, s, n, count]) => {
    for (let i = 0; i < count; i++) {
      const x = px(w + (rnd() + 0.5) * (e - w)), y = py(s + (rnd() + 0.5) * (n - s));
      d += `M${x.toFixed(1)} ${y.toFixed(1)}l${(1 + rnd() * 2).toFixed(1)} ${(rnd() * 2).toFixed(1)}l${(1 + rnd()).toFixed(1)} 1l-2 .4z`;
    }
  });
  return `<path class="lake" d="${d}"/>`;
}
const world = layer(LAND, "land", true, 1.7) + layer(ICE, "ice", true, 2) + layer(RIVERS, "river", false, 2) + layer(LAKES, "lake", true, 0.8) + specks();
document.querySelectorAll(".world").forEach(g => {
  g.innerHTML = [-531, 0, 531].map(dx => `<g transform="translate(${dx} 0)">${world}</g>`).join("");
});
```
